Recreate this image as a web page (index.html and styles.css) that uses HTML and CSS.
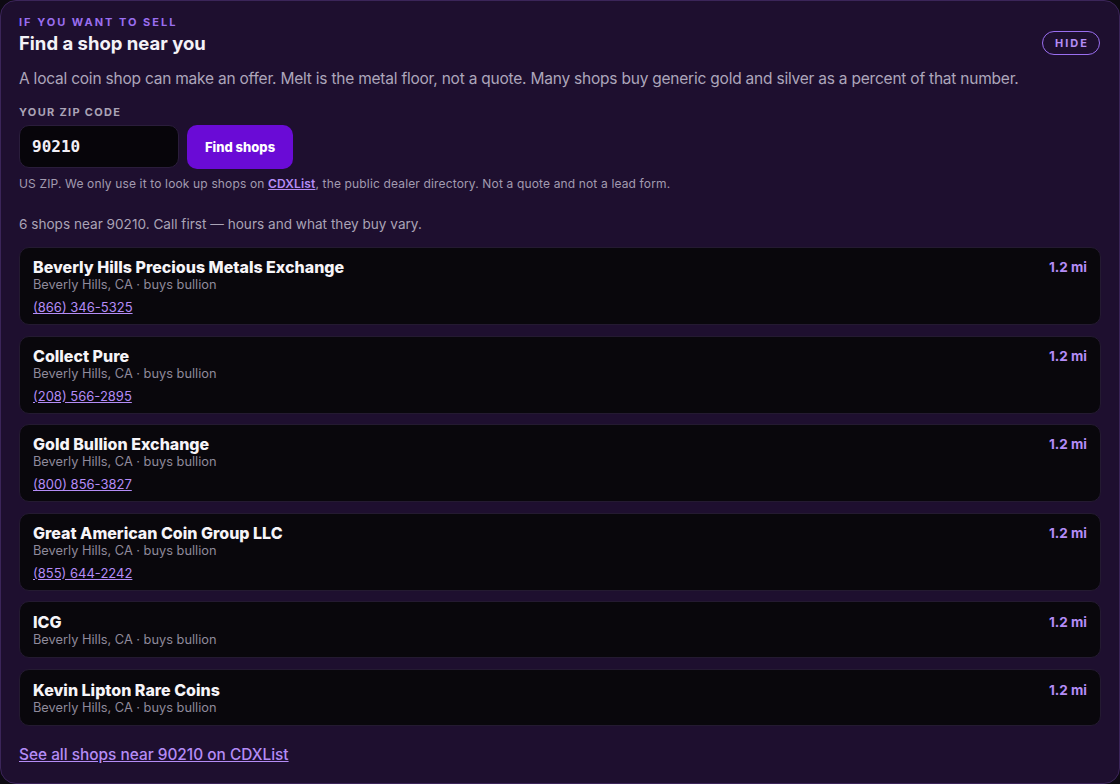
FILE: index.html
```html
<!DOCTYPE html>
<html lang="en">

<head>
    <meta charset="UTF-8">
    <meta name="viewport" content="width=device-width, initial-scale=1.0">
    <title>Find a shop near you</title>
    <link rel="stylesheet" href="styles.css">
</head>

<body>

    <section class="panel">
        <div class="panel-head">
            <div>
                <p class="eyebrow">If you want to sell</p>
                <h2>Find a shop near you</h2>
            </div>
            <button class="hide-btn">Hide</button>
        </div>

        <p class="intro">A local coin shop can make an offer. Melt is the metal floor, not a quote. Many shops buy generic gold and silver as a percent of that number.</p>

        <label class="field-label" for="zip">Your ZIP code</label>
        <div class="zip-row">
            <input type="text" id="zip" value="90210">
            <button class="find-btn">Find shops</button>
        </div>
        <p class="note">US ZIP. We only use it to look up shops on <a href="#">CDXList</a>, the public dealer directory. Not a quote and not a lead form.</p>

        <p class="count">6 shops near 90210. Call first — hours and what they buy vary.</p>

        <ul class="shops">
            <li class="shop">
                <div class="shop-info">
                    <strong>Beverly Hills Precious Metals Exchange</strong>
                    <span class="shop-meta">Beverly Hills, CA · buys bullion</span>
                    <a class="phone" href="#">(866) 346-5325</a>
                </div>
                <span class="dist">1.2 mi</span>
            </li>
            <li class="shop">
                <div class="shop-info">
                    <strong>Collect Pure</strong>
                    <span class="shop-meta">Beverly Hills, CA · buys bullion</span>
                    <a class="phone" href="#">(208) 566-2895</a>
                </div>
                <span class="dist">1.2 mi</span>
            </li>
            <li class="shop">
                <div class="shop-info">
                    <strong>Gold Bullion Exchange</strong>
                    <span class="shop-meta">Beverly Hills, CA · buys bullion</span>
                    <a class="phone" href="#">(800) 856-3827</a>
                </div>
                <span class="dist">1.2 mi</span>
            </li>
            <li class="shop">
                <div class="shop-info">
                    <strong>Great American Coin Group LLC</strong>
                    <span class="shop-meta">Beverly Hills, CA · buys bullion</span>
                    <a class="phone" href="#">(855) 644-2242</a>
                </div>
                <span class="dist">1.2 mi</span>
            </li>
            <li class="shop no-phone">
                <div class="shop-info">
                    <strong>ICG</strong>
                    <span class="shop-meta">Beverly Hills, CA · buys bullion</span>
                </div>
                <span class="dist">1.2 mi</span>
            </li>
            <li class="shop no-phone">
                <div class="shop-info">
                    <strong>Kevin Lipton Rare Coins</strong>
                    <span class="shop-meta">Beverly Hills, CA · buys bullion</span>
                </div>
                <span class="dist">1.2 mi</span>
            </li>
        </ul>

        <a class="see-all" href="#">See all shops near 90210 on CDXList</a>
    </section>

</body>

</html>
```

FILE: styles.css
```css
* {
    margin: 0;
    padding: 0;
    box-sizing: border-box;
}

body {
    font-family: Inter, "Liberation Sans", sans-serif;
    background-color: #0d0a12;
    color: #f2eff6;
}

.panel {
    min-height: 100vh;
    background-color: #1e0f2f;
    border: 1px solid #3b2559;
    border-radius: 16px;
    padding: 14px 18px 16px;
}

.panel-head {
    display: flex;
    justify-content: space-between;
    align-items: flex-end;
}

.eyebrow {
    font-size: 11px;
    font-weight: 700;
    letter-spacing: 2px;
    text-transform: uppercase;
    color: #9a6ef0;
    line-height: 14px;
}

h2 {
    font-size: 18.5px;
    font-weight: 700;
    color: #f4f2f7;
    line-height: 24px;
    margin-top: 2px;
}

.hide-btn {
    background: none;
    border: 1px solid #9a6ef0;
    color: #b48cf6;
    border-radius: 12px;
    font-family: inherit;
    font-size: 11px;
    font-weight: 700;
    letter-spacing: 2px;
    text-transform: uppercase;
    padding: 5px 10px 5px 12px;
    margin-right: 1px;
    line-height: 12px;
}

.intro {
    font-size: 15.5px;
    line-height: 22px;
    color: #ada6bb;
    margin-top: 13px;
    letter-spacing: -0.22px;
}

.field-label {
    display: block;
    font-size: 11px;
    font-weight: 700;
    letter-spacing: 1.3px;
    text-transform: uppercase;
    color: #aaa3b6;
    margin-top: 15px;
    line-height: 14px;
}

.zip-row {
    display: flex;
    gap: 8px;
    margin-top: 6px;
}

.zip-row input {
    width: 160px;
    height: 43px;
    background-color: #07050a;
    border: 1px solid #2a1d3b;
    border-radius: 10px;
    color: #f2eff6;
    font-family: "DejaVu Sans Mono", "Liberation Mono", monospace;
    font-size: 16px;
    font-weight: 600;
    padding: 0 12px;
}

.find-btn {
    width: 106px;
    height: 44px;
    background-color: #6a0bd6;
    border: none;
    border-radius: 10px;
    color: #fff;
    font-family: inherit;
    font-size: 13px;
    font-weight: 800;
}

.note {
    font-size: 12px;
    line-height: 16px;
    color: #a29bb0;
    margin-top: 7px;
    letter-spacing: 0.15px;
}

.note a {
    color: #b48cf6;
    font-weight: 600;
}

.count {
    font-size: 13.6px;
    line-height: 20px;
    color: #aaa3b6;
    margin-top: 22px;
}

.shops {
    list-style: none;
    display: flex;
    flex-direction: column;
    gap: 10.5px;
    margin-top: 13px;
}

.shop {
    display: flex;
    justify-content: space-between;
    align-items: flex-start;
    background-color: #09070c;
    border: 1px solid #241a31;
    border-radius: 10px;
    padding: 9px 13px 9px 13px;
}

.shop.no-phone {
    padding-top: 10px;
}

.shop-info {
    display: flex;
    flex-direction: column;
}

.shop-info strong {
    font-size: 16px;
    font-weight: 800;
    line-height: 20px;
    color: #f6f4f8;
}

.shop-meta {
    font-size: 12.8px;
    line-height: 16px;
    color: #8f8a9b;
}

.phone {
    font-size: 13px;
    line-height: 16px;
    color: #b48cf6;
    margin-top: 6px;
    align-self: flex-start;
}

.dist {
    font-size: 13.5px;
    font-weight: 700;
    color: #b48cf6;
    line-height: 20px;
}

.see-all {
    display: inline-block;
    margin-top: 19px;
    font-size: 15.4px;
    line-height: 20px;
    color: #b48cf6;
    font-weight: 500;
}
```
